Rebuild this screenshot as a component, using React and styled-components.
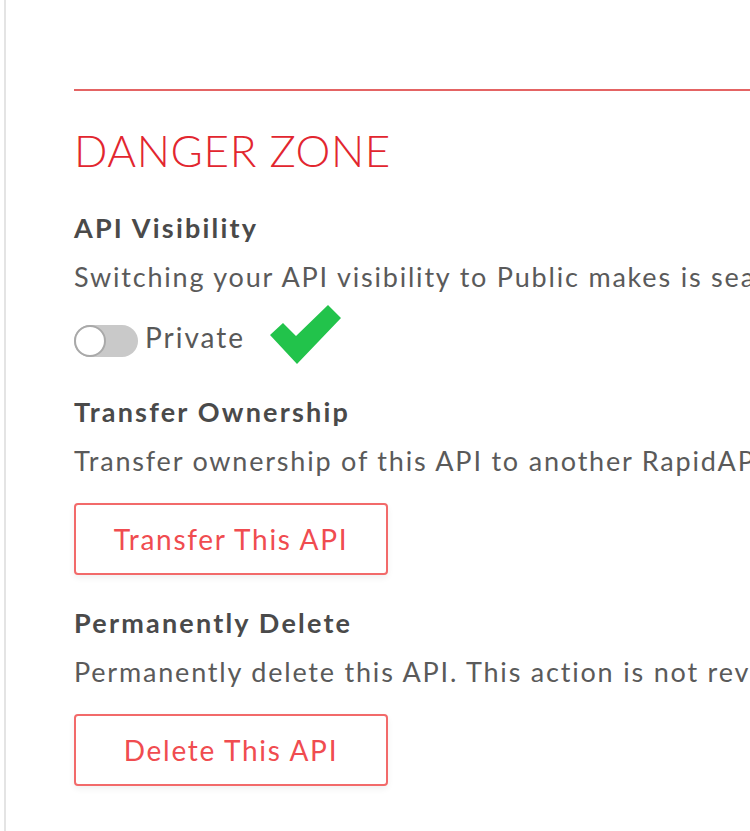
import React, { useState } from 'react'
import styled, { createGlobalStyle } from 'styled-components'

const GlobalStyle = createGlobalStyle`
  html, body {
    margin: 0;
    padding: 0;
    background: #fff;
    overflow: hidden;
  }
  body {
    font-family: Lato, "Open Sans", sans-serif;
  }
`

const Panel = styled.div`
  margin-left: 4px;
  min-height: 831px;
  border-left: 2px solid #e4e4e4;
  padding: 89px 0 0 68px;
  box-sizing: border-box;
  white-space: nowrap;
  overflow: hidden;
`

const Divider = styled.div`
  height: 2px;
  background: #e46464;
`

const Title = styled.h2`
  margin: 33px 0 0;
  font-size: 44px;
  line-height: 1.2;
  font-weight: 300;
  letter-spacing: 0.6px;
  color: #e2262f;
`

const Section = styled.section`
  margin-top: ${props => props.gap}px;
`

const Heading = styled.h3`
  margin: 0;
  font-size: 27px;
  line-height: 36px;
  font-weight: 700;
  letter-spacing: 2.2px;
  color: #4a4a4a;
`

const Desc = styled.p`
  margin: 13px 0 0;
  font-size: 27px;
  line-height: 36px;
  letter-spacing: 1.8px;
  color: #5a5a5a;
`

const ToggleRow = styled.div`
  display: flex;
  align-items: center;
  height: 36px;
  margin-top: 28px;
`

const Switch = styled.button`
  width: 64px;
  height: 32px;
  padding: 0;
  border: none;
  border-radius: 16px;
  background: ${props => (props.on ? '#22c34b' : '#c9c9c9')};
  display: flex;
  align-items: center;
  justify-content: ${props => (props.on ? 'flex-end' : 'flex-start')};
  cursor: pointer;
`

const Knob = styled.span`
  width: 32px;
  height: 32px;
  box-sizing: border-box;
  border-radius: 50%;
  background: #fff;
  border: 2px solid #a9a9a9;
`

const SwitchLabel = styled.span`
  margin: 0 0 7px 7px;
  font-size: 28px;
  line-height: 36px;
  letter-spacing: 2px;
  color: #585858;
`

const Check = styled.svg`
  margin-left: 24px;
  margin-bottom: 13px;
  flex-shrink: 0;
`

const DangerButton = styled.button`
  display: block;
  width: 314px;
  height: 72px;
  margin-top: 24px;
  box-sizing: border-box;
  background: #fff;
  border: 2px solid #f26a6a;
  border-radius: 4px;
  box-shadow: 0 3px 6px rgba(0, 0, 0, 0.06);
  font-family: Lato, "Open Sans", sans-serif;
  font-size: 28px;
  font-weight: 400;
  letter-spacing: 1.7px;
  color: #f04c50;
  cursor: pointer;
`

const App = () => {
  const [isPublic, setIsPublic] = useState(false)
  return (
    <>
      <GlobalStyle />
      <Panel>
        <Divider />
        <Title>DANGER ZONE</Title>

        <Section gap={33}>
          <Heading>API Visibility</Heading>
          <Desc>Switching your API visibility to Public makes is searchable and discoverable by all RapidAPI users.</Desc>
          <ToggleRow>
            <Switch on={isPublic} onClick={() => setIsPublic(!isPublic)}>
              <Knob />
            </Switch>
            <SwitchLabel>{isPublic ? 'Public' : 'Private'}</SwitchLabel>
            <Check width="73" height="59" viewBox="0 0 73 59">
              <polygon points="1,30 14,18 27,31 59,0 72,13 28,59" fill="#22c34b" />
            </Check>
          </ToggleRow>
        </Section>

        <Section gap={35}>
          <Heading>Transfer Ownership</Heading>
          <Desc>Transfer ownership of this API to another RapidAPI user or organization.</Desc>
          <DangerButton>Transfer This API</DangerButton>
        </Section>

        <Section gap={30}>
          <Heading>Permanently Delete</Heading>
          <Desc>Permanently delete this API. This action is not reversible.</Desc>
          <DangerButton>Delete This API</DangerButton>
        </Section>
      </Panel>
    </>
  )
}

export default App
